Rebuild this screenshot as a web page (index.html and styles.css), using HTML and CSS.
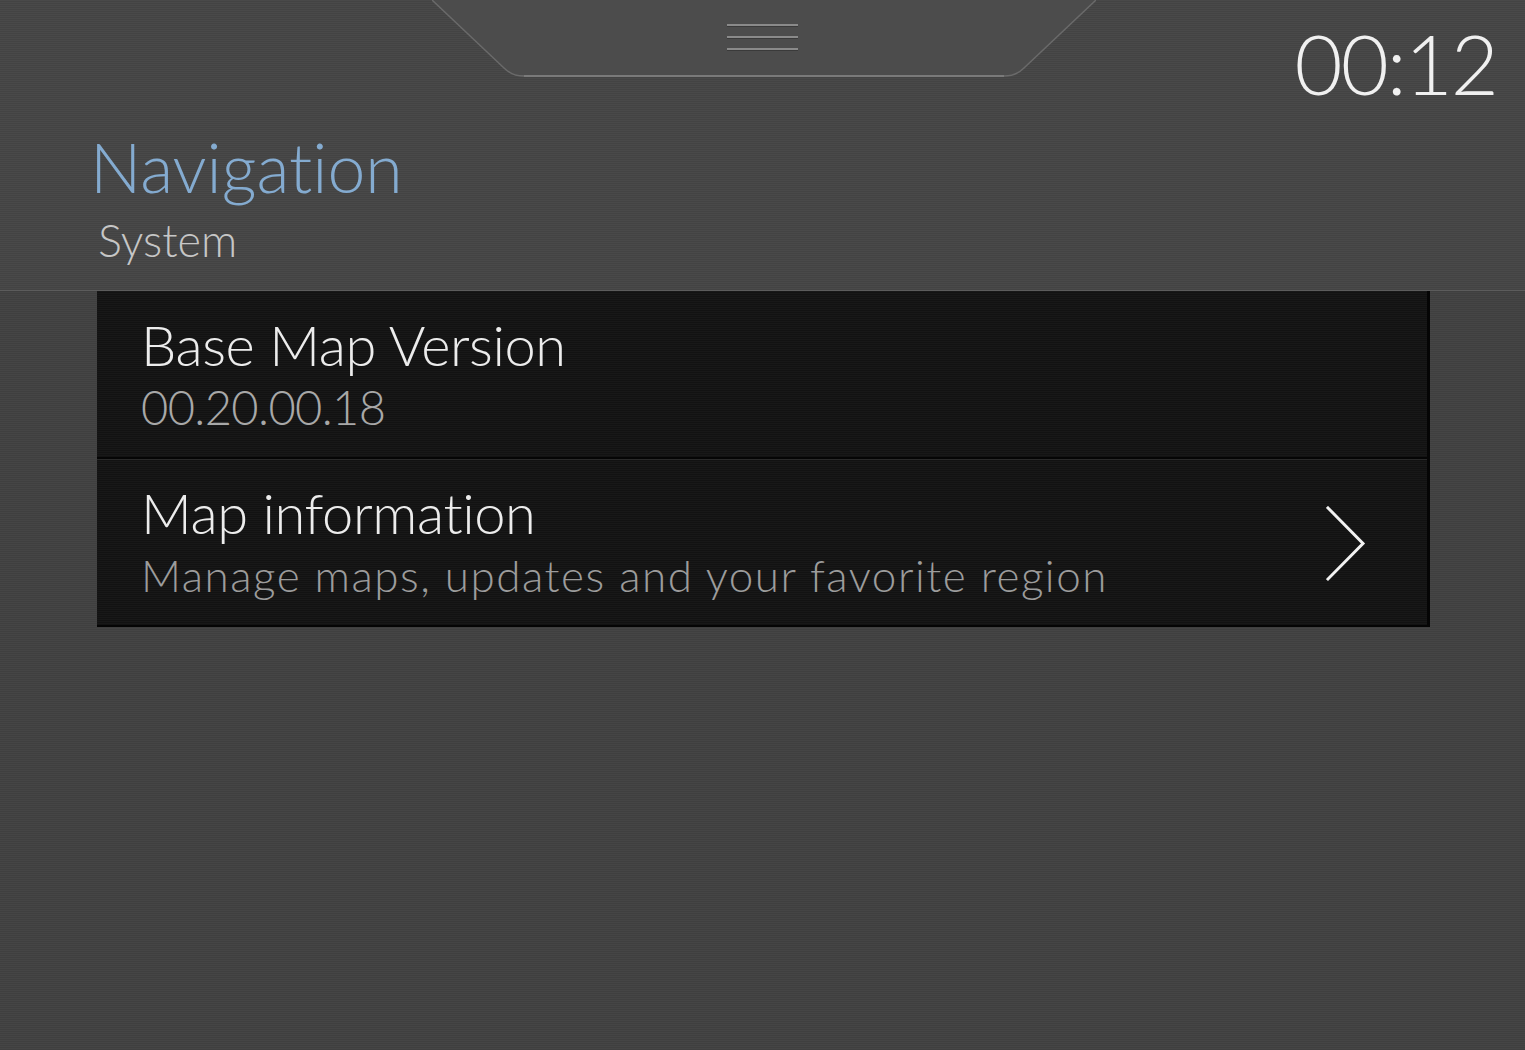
FILE: index.html
```html
<!DOCTYPE html>
<html lang="en">
<head>
<meta charset="utf-8">
<title>Navigation - System</title>
<link rel="stylesheet" href="styles.css">
</head>
<body>
<div class="screen">
  <header class="header">
    <div class="topbar">
      <div class="tab">
        <svg class="tab-shape" width="664" height="78" viewBox="0 0 664 78">
          <path d="M0 0 L72 68 Q80 76 92 76 L572 76 Q584 76 592 68 L664 0 Z" fill="#4c4c4c"/>
          <path d="M0 0 L72 68 Q80 76 92 76 L572 76 Q584 76 592 68 L664 0" fill="none" stroke="#6a6a6a" stroke-width="1.5"/>
          <path d="M92 76 L572 76" fill="none" stroke="#7a7a7a" stroke-width="2"/>
        </svg>
        <div class="handle">
          <span></span><span></span><span></span>
        </div>
      </div>
      <div class="clock">00:12</div>
    </div>
    <div class="titles">
      <h1 class="title">Navigation</h1>
      <div class="subtitle">System</div>
    </div>
  </header>
  <main class="content">
    <ul class="list">
      <li class="row">
        <div class="row-text">
          <div class="row-title">Base Map Version</div>
          <div class="row-sub version">00.20.00.18</div>
        </div>
      </li>
      <li class="row">
        <div class="row-text">
          <div class="row-title">Map information</div>
          <div class="row-sub desc">Manage maps, updates and your favorite region</div>
        </div>
        <svg class="chevron" width="40" height="76" viewBox="0 0 40 76">
          <path d="M2 2 L37 37.5 L2 73" fill="none" stroke="#f2f2f2" stroke-width="3" stroke-linecap="square"/>
        </svg>
      </li>
    </ul>
  </main>
</div>
</body>
</html>
```

FILE: styles.css
```css
* { box-sizing: border-box; }
html, body { margin: 0; padding: 0; }
body {
  width: 1525px;
  height: 1050px;
  overflow: hidden;
  font-family: "Lato", "Open Sans", "Liberation Sans", sans-serif;
  font-weight: 300;
  font-variant-ligatures: none;
  background-color: #424242;
  background-image: repeating-linear-gradient(to bottom, #454545 0px, #454545 1px, #3f3f3f 1px, #3f3f3f 2px);
}
.screen {
  width: 1525px;
  height: 1050px;
  display: flex;
  flex-direction: column;
}
.header {
  height: 291px;
  border-bottom: 1px solid #5c5c5c;
  background-image: repeating-linear-gradient(to bottom, #494949 0px, #494949 1px, #434343 1px, #434343 2px);
  display: flex;
  flex-direction: column;
}
.topbar {
  display: flex;
  align-items: flex-start;
  height: 128px;
}
.tab {
  position: relative;
  margin-left: 432px;
  width: 664px;
  height: 78px;
}
.tab-shape { display: block; }
.handle {
  position: absolute;
  left: 295px;
  top: 24px;
  width: 71px;
  display: flex;
  flex-direction: column;
  gap: 10px;
}
.handle span {
  display: block;
  height: 2px;
  background: #8a8a8a;
  box-shadow: 0 1px 0 #3a3a3a;
}
.clock {
  margin-left: auto;
  margin-right: 28px;
  margin-top: 18px;
  font-size: 83px;
  line-height: 90px;
  color: #f0f0f0;
  letter-spacing: -2px;
}
.titles {
  padding-left: 90px;
  display: flex;
  flex-direction: column;
}
.title {
  margin: 0;
  font-weight: 300;
  font-size: 68px;
  line-height: 78px;
  color: #84abd0;
}
.subtitle {
  margin-top: 8px;
  font-size: 45px;
  line-height: 52px;
  color: #c6c6c6;
  padding-left: 8px;
}
.content {
  flex: 1;
  padding-left: 97px;
}
.list {
  list-style: none;
  margin: 0;
  padding: 0;
  width: 1333px;
  border-right: 3px solid #050505;
  border-bottom: 2px solid #050505;
}
.row {
  display: flex;
  align-items: center;
  height: 166px;
  padding-left: 44px;
  padding-right: 61px;
  background-color: #151515;
  background-image: repeating-linear-gradient(to bottom, #181818 0px, #181818 1px, #121212 1px, #121212 2px);
}
.row + .row {
  height: 168px;
  border-top: 2px solid #050505;
  box-shadow: inset 0 1px 0 #2a2a2a;
}
.row-text {
  flex: 1;
  display: flex;
  flex-direction: column;
}
.row-title {
  font-size: 56px;
  line-height: 66px;
  letter-spacing: -0.4px;
  color: #ececec;
}
.row-sub {
  font-size: 47px;
  line-height: 58px;
  letter-spacing: -0.6px;
  color: #a8a8a8;
}
.desc {
  font-size: 44px;
  letter-spacing: 1.5px;
  color: #9c9c9c;
}
.chevron { display: block; flex: none; margin-top: 4px; }
```
